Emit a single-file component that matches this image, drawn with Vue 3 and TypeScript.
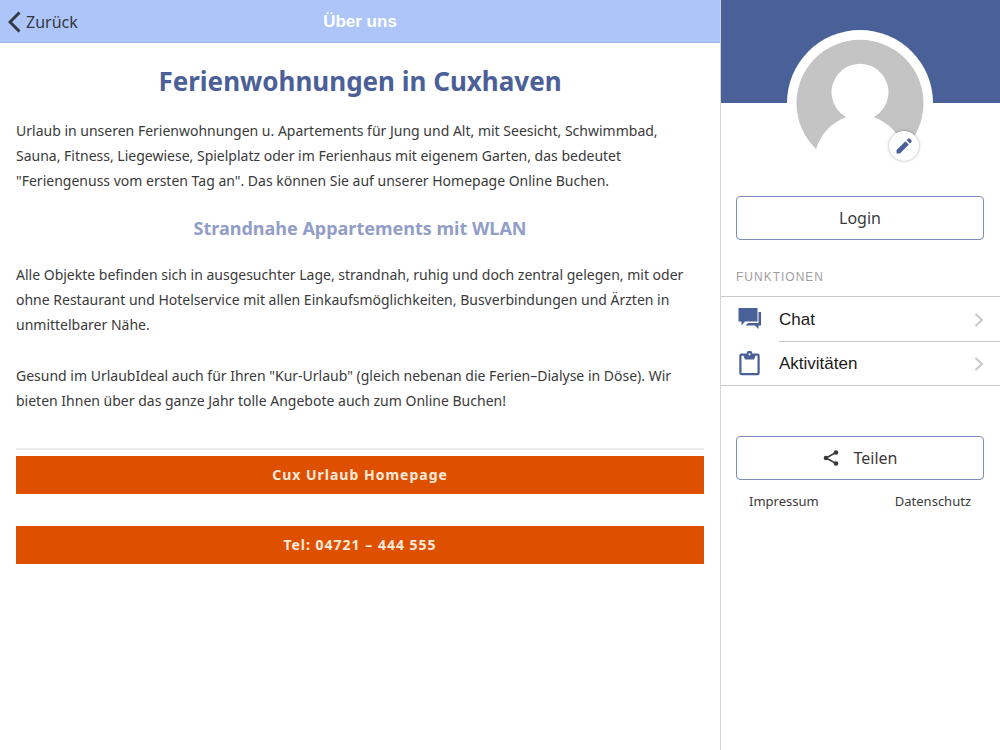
<script setup lang="ts">
interface Entry {
  id: string
  label: string
  paths: string[]
}

const entries: Entry[] = [
  {
    id: 'chat',
    label: 'Chat',
    paths: ['M0.500 1h19v13.500H7l-3.500 4v-4h-3z', 'M20.500 5H23v13.500h-2.500v3.500l-3.500-3.500H7.500l2.500-2.500h10.500z'],
  },
  {
    id: 'activities',
    label: 'Aktivitäten',
    paths: [
      'M3.500 2.500h5.200a2.800 2.800 0 0 1 5.600 0h5.200a2.200 2.200 0 0 1 2.200 2.200V22a2.200 2.200 0 0 1-2.200 2.200h-16A2.200 2.200 0 0 1 1.300 22V4.700a2.200 2.200 0 0 1 2.200-2.200zM3.500 4.700V22h16V4.700H17.500L16 8.500H7L5.500 4.700zM11.500 2.200a1.100 1.100 0 1 0 0 2.200a1.100 1.100 0 1 0 0-2.200z',
    ],
  },
]
</script>

<template>
  <div class="app">
    <main class="main">
      <header class="bar">
        <button class="back" type="button">
          <svg width="14" height="22" viewBox="0 0 14 22" aria-hidden="true">
            <path d="M11.500 1.500L2 11l9.500 9.500" fill="none" stroke="currentColor" stroke-width="3" />
          </svg>
          <span>Zurück</span>
        </button>
        <h1 class="bar-title">Über uns</h1>
      </header>
      <article class="content">
        <h2 class="headline">Ferienwohnungen in Cuxhaven</h2>
        <p>
          Urlaub in unseren Ferienwohnungen u. Apartements für Jung und Alt, mit Seesicht, Schwimmbad,
          Sauna, Fitness, Liegewiese, Spielplatz oder im Ferienhaus mit eigenem Garten, das bedeutet
          "Feriengenuss vom ersten Tag an". Das können Sie auf unserer Homepage Online Buchen.
        </p>
        <h3 class="subline">Strandnahe Appartements mit WLAN</h3>
        <p>
          Alle Objekte befinden sich in ausgesuchter Lage, strandnah, ruhig und doch zentral gelegen, mit oder
          ohne Restaurant und Hotelservice mit allen Einkaufsmöglichkeiten, Busverbindungen und Ärzten in
          unmittelbarer Nähe.
        </p>
        <p class="next">
          Gesund im UrlaubIdeal auch für Ihren "Kur-Urlaub" (gleich nebenan die Ferien–Dialyse in Döse). Wir
          bieten Ihnen über das ganze Jahr tolle Angebote auch zum Online Buchen!
        </p>
        <div class="actions">
          <a class="action" href="#homepage">Cux Urlaub Homepage</a>
          <a class="action" href="tel:04721444555">Tel: 04721 – 444 555</a>
        </div>
      </article>
    </main>

    <aside class="side">
      <div class="cover">
        <div class="avatar">
          <svg class="portrait" viewBox="0 0 146 146" aria-hidden="true">
            <circle cx="73" cy="73" r="73" fill="#fff" />
            <path d="M29 119A63.500 63.500 0 1 1 117 119A52 52 0 0 0 87 87A28.500 28.500 0 1 0 59 87A52 52 0 0 0 29 119z" fill="#c4c4c4" />
          </svg>
          <button class="edit" type="button" aria-label="Profilbild bearbeiten">
            <svg width="16" height="16" viewBox="0 0 16 16" fill="currentColor" aria-hidden="true">
              <path d="M.500 12L9.500 3.200l3.300 3.300L4 15.500H.500zM10.700 2.200l1.500-1.500a1.300 1.300 0 0 1 1.700 0l1.500 1.500a1.300 1.300 0 0 1 0 1.700L13.900 5.400z" />
            </svg>
          </button>
        </div>
      </div>
      <button class="outline" type="button">Login</button>
      <h2 class="section">Funktionen</h2>
      <nav class="list">
        <a v-for="entry in entries" :key="entry.id" class="row" :href="'#' + entry.id">
          <svg class="row-icon" width="24" height="25" viewBox="0 0 24 25" aria-hidden="true">
            <path v-for="(d, i) in entry.paths" :key="i" :d="d" fill="currentColor" fill-rule="evenodd" />
          </svg>
          <span class="row-body">
            <span>{{ entry.label }}</span>
            <svg width="10" height="14" viewBox="0 0 10 14" aria-hidden="true">
              <path d="M1.500 1L8 7l-6.500 6" fill="none" stroke="#c7c7cc" stroke-width="2" />
            </svg>
          </span>
        </a>
      </nav>
      <button class="outline share" type="button">
        <svg width="16" height="18" viewBox="0 0 16 18" aria-hidden="true">
          <path d="M13 3.500L3 9l10 5.500" fill="none" stroke="currentColor" stroke-width="1.500" />
          <circle cx="13" cy="3.500" r="2.300" fill="currentColor" />
          <circle cx="3" cy="9" r="2.300" fill="currentColor" />
          <circle cx="13" cy="14.500" r="2.300" fill="currentColor" />
        </svg>
        <span>Teilen</span>
      </button>
      <footer class="legal">
        <a href="#impressum">Impressum</a>
        <a href="#datenschutz">Datenschutz</a>
      </footer>
    </aside>
  </div>
</template>

<style>
body {
  margin: 0;
  background: #fff;
}
</style>

<style scoped>
.app {
  display: grid;
  grid-template-columns: minmax(0, 1fr) 280px;
  min-height: 100vh;
  font-family: "Noto Sans", "Open Sans", sans-serif;
  color: #3a3a3a;
}
.app * {
  box-sizing: border-box;
}
button {
  padding: 0;
  border: 0;
  background: none;
  font: inherit;
  color: inherit;
  cursor: pointer;
}
a {
  color: inherit;
  text-decoration: none;
}
h1, h2, h3, p {
  margin: 0;
}
.bar {
  display: grid;
  grid-template-columns: 1fr auto 1fr;
  align-items: center;
  height: 43px;
  padding: 2px 8px 0;
  background: #aec5f9;
  border-bottom: 1px solid #9fb1df;
}
.back {
  display: flex;
  align-items: center;
  justify-self: start;
  gap: 4px;
  font-size: 16px;
  line-height: 24px;
  color: #333843;
}
.bar-title {
  font: bold 17px/24px "Liberation Sans", Arial, sans-serif;
  color: #fff;
}
.content {
  padding: 20px 16px;
  font-size: 14px;
  line-height: 25px;
}
.headline {
  margin-bottom: 19px;
  font-size: 26px;
  line-height: 36px;
  text-align: center;
  color: #4b5f98;
}
.subline {
  margin: 23px 0 22px;
  font-size: 18px;
  line-height: 24px;
  text-align: center;
  color: #929dc8;
}
.next {
  margin-top: 26px;
}
.actions {
  display: flex;
  flex-direction: column;
  gap: 32px;
  margin-top: 35px;
  padding-top: 6px;
  border-top: 2px solid #ededed;
}
.action {
  padding: 7px;
  background: #de5000;
  font-size: 14px;
  font-weight: bold;
  line-height: 24px;
  letter-spacing: 1px;
  text-align: center;
  color: #ffeadb;
}
.side {
  display: flex;
  flex-direction: column;
  border-left: 1px solid #d4d4d6;
}
.cover {
  display: flex;
  justify-content: center;
  height: 196px;
  padding: 30px 2px 0 0;
  background: linear-gradient(#4a6098 103px, #fff 103px);
}
.avatar {
  position: relative;
  width: 146px;
  height: 146px;
}
.portrait {
  display: block;
  width: 100%;
}
.edit {
  position: absolute;
  right: 14px;
  bottom: 15px;
  display: grid;
  place-items: center;
  width: 30px;
  height: 30px;
  border-radius: 50%;
  background: #fff;
  box-shadow: 0 0 3px rgba(0, 0, 0, 0.35);
  color: #4a6098;
}
.outline {
  height: 44px;
  margin: 0 16px 0 15px;
  border: 1px solid #7f8dbb;
  border-radius: 4px;
  font-size: 16px;
  line-height: 24px;
}
.section {
  margin: 27px 15px 9px;
  font: normal 12px/20px "Liberation Sans", Arial, sans-serif;
  letter-spacing: 1px;
  text-transform: uppercase;
  color: #a0a0a0;
}
.list {
  border-top: 1px solid #c8c7cc;
  border-bottom: 1px solid #c8c7cc;
}
.row {
  display: flex;
  align-items: center;
  gap: 17px;
  padding-left: 17px;
  font: 17px/24px "Liberation Sans", Arial, sans-serif;
  color: #1a1a1a;
}
.row-icon {
  color: #4a6098;
}
.row-body {
  display: flex;
  flex: 1;
  align-items: center;
  justify-content: space-between;
  height: 44px;
  padding: 1px 16px 0 0;
}
.row + .row .row-body {
  border-top: 1px solid #c8c7cc;
}
.share {
  display: flex;
  align-items: center;
  justify-content: center;
  gap: 15px;
  margin-top: 50px;
}
.legal {
  display: flex;
  justify-content: space-between;
  padding: 11px 29px 0 28px;
  font-size: 13px;
  line-height: 20px;
}
</style>
